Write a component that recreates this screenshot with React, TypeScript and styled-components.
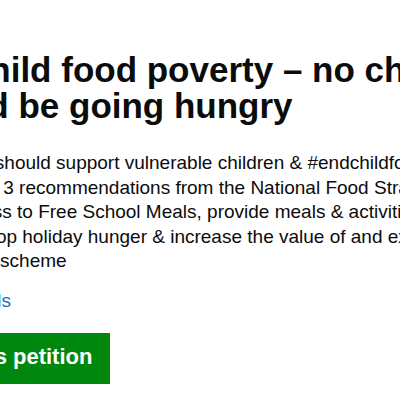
import React from "react";
import styled, { createGlobalStyle } from "styled-components";

const GlobalStyle = createGlobalStyle`
  html, body {
    margin: 0;
    padding: 0;
    background: #ffffff;
    overflow: hidden;
  }
  body {
    font-family: "Liberation Sans", Arial, Helvetica, sans-serif;
    color: #0b0c0c;
  }
`;

const Page = styled.main`
  width: 626px;
  margin-left: -103px;
  padding-top: 52px;
  display: flex;
  flex-direction: column;
  align-items: flex-start;
`;

const Title = styled.h1`
  margin: 0 0 0 -3px;
  font-size: 35px;
  line-height: 36px;
  font-weight: 700;
  color: #0b0c0c;
`;

const Action = styled.p`
  width: 638px;
  margin: 27px 0 0 -12px;
  font-size: 19px;
  line-height: 24.5px;
  color: #0b0c0c;
`;

const Details = styled.details`
  margin: 15.5px 0 0 -7.5px;
  font-size: 19px;
  line-height: 24.5px;
`;

const Summary = styled.summary`
  list-style: none;
  display: inline-block;
  color: #1d70b8;
  cursor: pointer;
  &::-webkit-details-marker {
    display: none;
  }
  &::before {
    content: "";
    display: inline-block;
    width: 0;
    height: 0;
    margin-right: 6px;
    border-style: solid;
    border-width: 6px 0 6px 12px;
    border-color: transparent transparent transparent #1d70b8;
  }
`;

const SignButton = styled.a`
  margin: 19px 0 0 -1px;
  display: inline-block;
  padding: 10px 18px 13px 18px;
  background: #00870d;
  color: #ffffff;
  font-size: 22px;
  line-height: 28px;
  font-weight: 700;
  text-decoration: none;
  box-shadow: 0 2px 0 #003a0a;
`;

export default function App() {
  return (
    <>
      <GlobalStyle />
      <Page>
        <Title>End child food poverty – no child should be going hungry</Title>
        <Action>
          Government should support vulnerable children &amp; #endchildfoodpoverty by
          implementing 3 recommendations from the National Food Strategy to expand
          access to Free School Meals, provide meals &amp; activities during holidays
          to stop holiday hunger &amp; increase the value of and expand the Healthy
          Start scheme
        </Action>
        <Details>
          <Summary>More details</Summary>
        </Details>
        <SignButton href="#">Sign this petition</SignButton>
      </Page>
    </>
  );
}
